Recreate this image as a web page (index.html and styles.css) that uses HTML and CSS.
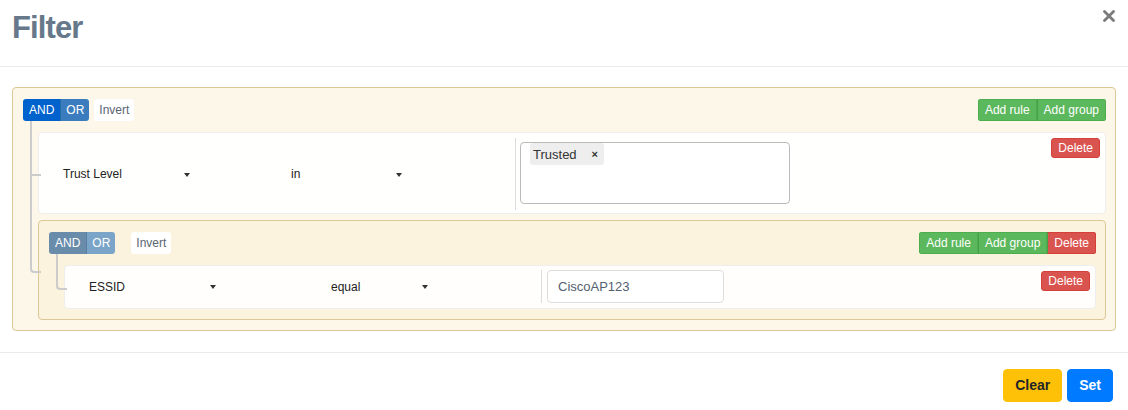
FILE: index.html
```html
<!DOCTYPE html>
<html>
<head>
<meta charset="utf-8">
<link rel="stylesheet" href="styles.css">
</head>
<body>
<div class="modal">
  <div class="modal-header">
    <h1 class="title">Filter</h1>
    <button class="close" aria-label="Close">
      <svg width="12" height="12" viewBox="0 0 12 12"><path d="M1.5 1.5L10.5 10.5M10.5 1.5L1.5 10.5" stroke="#7a7a7a" stroke-width="2.8" stroke-linecap="round"/></svg>
    </button>
  </div>
  <div class="modal-body">
    <div class="group">
      <div class="group-header">
        <div class="group-left">
          <div class="conditions">
            <span class="cond cond-and active">AND</span><span class="cond cond-or">OR</span>
          </div>
          <span class="invert">Invert</span>
        </div>
        <div class="actions">
          <span class="btn-xs btn-success">Add rule</span><span class="btn-xs btn-success">Add group</span>
        </div>
      </div>
      <div class="rules-list">
        <div class="rule rule-multi">
          <div class="sel sel-filter"><span class="sel-label">Trust Level</span><span class="caret"></span></div>
          <div class="sel sel-op sel-op-in"><span class="sel-label">in</span><span class="caret"></span></div>
          <div class="value value-multi">
            <div class="multi">
              <span class="tag">Trusted<span class="tag-x">×</span></span>
            </div>
          </div>
          <span class="btn-xs btn-danger rule-delete">Delete</span>
        </div>
        <div class="group group-nested">
          <div class="group-header">
            <div class="group-left">
              <div class="conditions conditions-muted">
                <span class="cond cond-and">AND</span><span class="cond cond-or">OR</span>
              </div>
              <span class="invert invert-far">Invert</span>
            </div>
            <div class="actions">
              <span class="btn-xs btn-success">Add rule</span><span class="btn-xs btn-success">Add group</span><span class="btn-xs btn-danger">Delete</span>
            </div>
          </div>
          <div class="rules-list">
            <div class="rule rule-text">
              <div class="sel sel-filter"><span class="sel-label">ESSID</span><span class="caret"></span></div>
              <div class="sel sel-op sel-op-equal"><span class="sel-label">equal</span><span class="caret"></span></div>
              <div class="value value-text">
                <div class="input">CiscoAP123</div>
              </div>
              <span class="btn-xs btn-danger rule-delete rule-delete-low">Delete</span>
            </div>
          </div>
        </div>
      </div>
    </div>
  </div>
  <div class="modal-footer">
    <button class="btn btn-warning">Clear</button>
    <button class="btn btn-primary">Set</button>
  </div>
</div>
</body>
</html>
```
FILE: styles.css
```css
* { box-sizing: border-box; }
html, body { margin: 0; padding: 0; background: #fff; }
body {
  font-family: "Liberation Sans", Arial, sans-serif;
  font-size: 12px;
  color: #222;
  width: 1128px;
  height: 410px;
  overflow: hidden;
}

.modal-header {
  height: 67px;
  padding: 10px 12px 0 12px;
  border-bottom: 1px solid #e9ecef;
  display: flex;
  justify-content: space-between;
  align-items: flex-start;
}
.title {
  margin: 0;
  font-size: 31px;
  line-height: 36px;
  font-weight: bold;
  letter-spacing: -0.9px;
  color: #66788a;
}
.close {
  border: 0;
  background: none;
  padding: 0;
  margin: 0 1px 0 0;
  width: 12px;
  height: 12px;
  display: block;
}
.close svg { display: block; }

.modal-body {
  padding: 20px 12px 21px 12px;
}

.group {
  border: 1px solid #dcc896;
  border-radius: 4px;
  background: rgba(250, 240, 210, 0.5);
  padding: 11px 9px 10px 10px;
}

.group-header {
  display: flex;
  justify-content: space-between;
  align-items: flex-start;
  height: 22px;
}
.group-left { display: flex; align-items: center; }

.conditions { display: flex; border-radius: 3px; overflow: hidden; }
.cond {
  display: block;
  height: 22px;
  line-height: 22px;
  padding: 0 6px;
  color: #fff;
  font-size: 12px;
}
.cond-and { background: #0062cc; padding: 0 6px; }
.cond-or { background: #3a7cbe; padding: 0 5px; border-left: 1px solid #2b6aa9; }
.conditions-muted .cond-and { background: #6a8cab; }
.conditions-muted .cond-or { background: #7aa4c8; border-left: 1px solid #5b7fa0; }

.invert {
  display: block;
  margin-left: 5px;
  height: 22px;
  line-height: 22px;
  padding: 0 5px;
  background: #fff;
  border-radius: 3px;
  color: #5a6572;
}
.invert-far { margin-left: 16px; }

.actions { display: flex; border-radius: 3px; overflow: hidden; }
.btn-xs {
  display: block;
  height: 22px;
  line-height: 20px;
  padding: 0 6px;
  font-size: 12px;
  color: #fff;
  border: 1px solid transparent;
}
.btn-success { background: #5cb85c; border-color: #4cae4c; }
.btn-danger { background: #d9534f; border-color: #d43f3a; }
.actions .btn-xs + .btn-xs { border-left-color: #4a9e4a; }

.rules-list {
  margin-top: 11px;
  padding-left: 15px;
  display: flex;
  flex-direction: column;
  gap: 6px;
}
.rules-list > * { position: relative; }
.rules-list > *::before {
  content: "";
  position: absolute;
  left: -9px;
  width: 9px;
  top: -7px;
  height: calc(50% + 8px);
  border-left: 2px solid #ccc;
  border-bottom: 2px solid #ccc;
}
.rules-list > *:first-child::before {
  top: -12px;
  height: calc(50% + 13px);
}
.rules-list > *:last-child::before { border-radius: 0 0 0 4px; }
.rules-list > *:not(:last-child)::after {
  content: "";
  position: absolute;
  left: -9px;
  top: 50%;
  height: calc(50% + 7px);
  border-left: 2px solid #ccc;
}

.rule {
  display: flex;
  align-items: center;
  border: 1px solid #eee;
  border-radius: 4px;
  background: rgba(255, 255, 255, 0.9);
  padding: 5px 5px 3px 5px;
}
.rule-text { padding: 4px 5px 5px 5px; }

.sel { display: flex; align-items: center; font-size: 12px; color: #222; }
.sel-label { flex: 1; white-space: nowrap; }
.caret {
  width: 0;
  height: 0;
  border-top: 4px solid #333;
  border-left: 3.5px solid transparent;
  border-right: 3.5px solid transparent;
  margin-top: 1px;
}
.sel-filter { width: 160px; padding-left: 19px; padding-right: 14px; }
.sel-op { width: 200px; margin-right: 111px; }
.sel-op-in { padding-left: 87px; padding-right: 2px; }
.sel-op-equal { padding-left: 101px; padding-right: 2px; }

.value {
  align-self: stretch;
  border-left: 1px solid #ddd;
  padding-left: 4px;
}
.value-multi { padding-top: 4px; padding-bottom: 6px; }
.value-text { padding-left: 5px; align-self: center; }

.multi {
  width: 270px;
  height: 62px;
  border: 1px solid #bbb;
  border-radius: 4px;
  background: #fff;
  padding: 0 0 0 9px;
}
.tag {
  display: inline-flex;
  align-items: center;
  height: 22px;
  padding: 0 6px 0 3px;
  background: #eee;
  border-radius: 3px;
  font-size: 13px;
  color: #333;
}
.tag-x {
  margin-left: 15px;
  font-weight: bold;
  font-size: 11px;
  color: #333;
}

.input {
  width: 177px;
  height: 33px;
  line-height: 31px;
  border: 1px solid #ddd;
  border-radius: 4px;
  background: #fff;
  padding-left: 10px;
  font-size: 13px;
  color: #536170;
}

.rule-delete {
  align-self: flex-start;
  margin-left: auto;
  height: 20px;
  line-height: 18px;
  border-radius: 3px;
}
.rule-delete-low { margin-top: 1px; }

.modal-footer {
  border-top: 1px solid #e9ecef;
  padding: 16px 15px 0 0;
  display: flex;
  justify-content: flex-end;
  gap: 5px;
}
.btn {
  font-family: "Liberation Sans", Arial, sans-serif;
  font-size: 14px;
  font-weight: bold;
  line-height: 19px;
  padding: 6px 11px;
  border: 1px solid transparent;
  border-radius: 4px;
}
.btn-warning { background: #ffc107; border-color: #ffc107; color: #212529; }
.btn-primary { background: #007bff; border-color: #007bff; color: #fff; }
```
